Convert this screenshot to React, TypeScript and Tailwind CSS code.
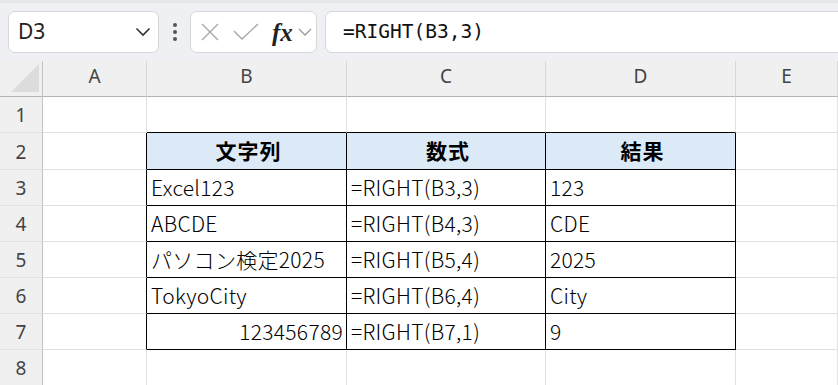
const cols = ["A", "B", "C", "D", "E"];
const colW = ["w-[104px]", "w-[200px]", "w-[199px]", "w-[190px]", "flex-1"];

type Row = { n: number; h: string; cells: string[]; head?: boolean };

const rows: Row[] = [
  { n: 1, h: "h-[36px]", cells: ["", "", "", "", ""] },
  { n: 2, h: "h-[37px]", cells: ["", "文字列", "数式", "結果", ""], head: true },
  { n: 3, h: "h-[36px]", cells: ["", "Excel123", "=RIGHT(B3,3)", "123", ""] },
  { n: 4, h: "h-[36px]", cells: ["", "ABCDE", "=RIGHT(B4,3)", "CDE", ""] },
  { n: 5, h: "h-[36px]", cells: ["", "パソコン検定2025", "=RIGHT(B5,4)", "2025", ""] },
  { n: 6, h: "h-[36px]", cells: ["", "TokyoCity", "=RIGHT(B6,4)", "City", ""] },
  { n: 7, h: "h-[36px]", cells: ["", "123456789", "=RIGHT(B7,1)", "9", ""] },
  { n: 8, h: "h-[36px]", cells: ["", "", "", "", ""] },
];

function cellClass(r: number, c: number) {
  // r is row number 1..8, c is column index 0..4
  const inTable = r >= 2 && r <= 7 && c >= 1 && c <= 3;
  const right =
    (c === 0 && r >= 2 && r <= 7) || inTable ? "border-r-black" : "border-r-[#e1e1e1]";
  const bottom =
    (r === 1 && c >= 1 && c <= 3) || inTable ? "border-b-black" : "border-b-[#e1e1e1]";
  return `${right} ${bottom}`;
}

function FormulaBar() {
  return (
    <div className="flex h-[61px] items-center border-t-[3px] border-[#e4e6e9] bg-[#eef0f3] pl-[8px]">
      <div className="flex h-[42px] w-[151px] items-center justify-between rounded-[7px] border border-[#d5d7da] bg-white pl-[9px] pr-[7px]">
        <span className="text-[21px] text-[#222] [font-family:'Noto_Sans',sans-serif]">D3</span>
        <svg width="16" height="10" viewBox="0 0 16 10" fill="none">
          <path d="M1.5 1.5 L8 8 L14.5 1.5" stroke="#333" strokeWidth="1.6" />
        </svg>
      </div>
      <div className="flex w-[31px] flex-col items-center justify-center gap-[3px]">
        <span className="h-[4px] w-[4px] rounded-full bg-[#555]" />
        <span className="h-[4px] w-[4px] rounded-full bg-[#555]" />
        <span className="h-[4px] w-[4px] rounded-full bg-[#555]" />
      </div>
      <div className="flex h-[42px] w-[127px] items-center rounded-[7px] border border-[#d5d7da] bg-white pl-[9px]">
        <svg width="20" height="20" viewBox="0 0 20 20" fill="none">
          <path d="M2 2 L18 18 M18 2 L2 18" stroke="#a8a8a8" strokeWidth="1.4" />
        </svg>
        <svg className="ml-[13px]" width="26" height="18" viewBox="0 0 26 18" fill="none">
          <path d="M1 8 L9 16 L25 1" stroke="#a8a8a8" strokeWidth="1.4" />
        </svg>
        <span className="ml-[13px] text-[25px] font-bold italic leading-none text-[#222] [font-family:'Liberation_Serif',serif]">
          fx
        </span>
        <svg className="ml-[5px]" width="14" height="8" viewBox="0 0 14 8" fill="none">
          <path d="M1 1 L7 7 L13 1" stroke="#9a9a9a" strokeWidth="1.3" />
        </svg>
      </div>
      <div className="-mr-[12px] ml-[8px] flex h-[42px] flex-1 items-center rounded-[7px] border border-[#d5d7da] bg-white pl-[17px]">
        <span className="text-[19.5px] text-[#111] [font-family:'DejaVu_Sans_Mono',monospace]">
          =RIGHT(B3,3)
        </span>
      </div>
    </div>
  );
}

function ColumnHeader() {
  return (
    <div className="flex h-[36px] bg-[#f0f0f0]">
      <div className="relative h-full w-[43px] shrink-0 border-r border-b border-r-[#c4c4c4] border-b-[#b4b4b4]">
        <div className="absolute bottom-[4px] right-[3px] h-0 w-0 border-b-[28px] border-l-[28px] border-b-[#dcdcdc] border-l-transparent" />
      </div>
      {cols.map((c, i) => (
        <div
          key={c}
          className={`${colW[i]} flex h-full shrink-0 items-center justify-center border-r border-b border-r-[#d8d8d8] border-b-[#b4b4b4] pb-[4px] text-[19px] text-[#444] [font-family:'Noto_Sans',sans-serif]`}
        >
          {c}
        </div>
      ))}
    </div>
  );
}

export default function App() {
  return (
    <div className="h-[385px] w-[838px] overflow-hidden bg-white">
      <FormulaBar />
      <ColumnHeader />
      {rows.map((row) => (
        <div key={row.n} className={`flex ${row.h}`}>
          <div className="flex h-full w-[43px] shrink-0 items-center justify-center border-r border-b border-r-[#c4c4c4] border-b-[#e1e1e1] bg-[#f0f0f0] pt-[2px] text-[19px] text-[#444] [font-family:'Noto_Sans',sans-serif]">
            {row.n}
          </div>
          {row.cells.map((text, c) => {
            const inTable = row.n >= 2 && row.n <= 7 && c >= 1 && c <= 3;
            const head = row.head && inTable;
            const numeric = c === 1 && row.n === 7;
            return (
              <div
                key={c}
                className={`${colW[c]} flex h-full shrink-0 items-center overflow-hidden whitespace-nowrap border-r border-b ${cellClass(
                  row.n,
                  c,
                )} ${head ? "justify-center bg-[#dce9f7] font-bold tracking-[1px]" : "font-light tracking-[0.3px]"} ${
                  numeric ? "justify-end pr-[3px]" : "pl-[4px]"
                } text-[21px] text-black [font-family:'Noto_Sans_CJK_JP',sans-serif]`}
              >
                {text}
              </div>
            );
          })}
        </div>
      ))}
    </div>
  );
}
